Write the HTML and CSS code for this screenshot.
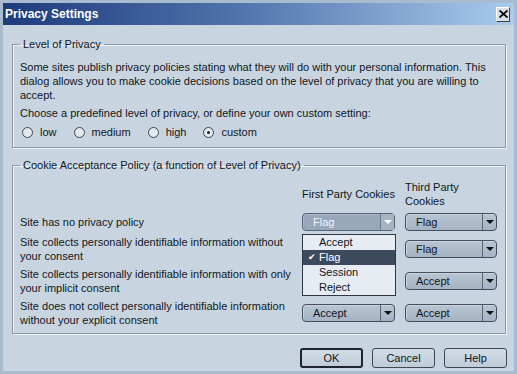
FILE: index.html
```html
<!DOCTYPE html>
<html lang="en">
<head>
    <meta charset="UTF-8">
    <title>Privacy Settings</title>
    <link rel="stylesheet" href="styles.css">
</head>
<body>
    <div class="window">
        <div class="titlebar">
            <span class="title">Privacy Settings</span>
            <span class="close">
                <svg width="9" height="8" viewBox="0 0 9 8"><path d="M0.5 0.5 L8.5 7.5 M8.5 0.5 L0.5 7.5" stroke="#000" stroke-width="1.8"/></svg>
            </span>
        </div>

        <div class="content">
            <fieldset class="group level">
                <legend>Level of Privacy</legend>
                <p class="intro">Some sites publish privacy policies stating what they will do with your personal information. This dialog allows you to make cookie decisions based on the level of privacy that you are willing to accept.</p>
                <p class="prompt">Choose a predefined level of privacy, or define your own custom setting:</p>
                <div class="levels">
                    <label class="radio"><span class="circle"></span>low</label>
                    <label class="radio"><span class="circle"></span>medium</label>
                    <label class="radio"><span class="circle"></span>high</label>
                    <label class="radio"><span class="circle checked"></span>custom</label>
                </div>
            </fieldset>

            <fieldset class="group policy">
                <legend>Cookie Acceptance Policy (a function of Level of Privacy)</legend>
                <div class="policy-grid">
                    <span></span>
                    <span class="col-head">First Party Cookies</span>
                    <span class="col-head">Third Party<br>Cookies</span>

                    <span class="site">Site has no privacy policy</span>
                    <div class="combo open">
                        <span class="value">Flag</span><span class="arrow"></span>
                        <ul class="menu">
                            <li>Accept</li>
                            <li class="picked"><span class="tick">&#10004;</span>Flag</li>
                            <li>Session</li>
                            <li>Reject</li>
                        </ul>
                    </div>
                    <div class="combo"><span class="value">Flag</span><span class="arrow"></span></div>

                    <span class="site">Site collects personally identifiable information without your consent</span>
                    <span></span>
                    <div class="combo"><span class="value">Flag</span><span class="arrow"></span></div>

                    <span class="site">Site collects personally identifiable information with only your implicit consent</span>
                    <span></span>
                    <div class="combo"><span class="value">Accept</span><span class="arrow"></span></div>

                    <span class="site">Site does not collect personally identifiable information without your explicit consent</span>
                    <div class="combo"><span class="value">Accept</span><span class="arrow"></span></div>
                    <div class="combo"><span class="value">Accept</span><span class="arrow"></span></div>
                </div>
            </fieldset>

            <div class="actions">
                <button class="btn default">OK</button>
                <button class="btn">Cancel</button>
                <button class="btn">Help</button>
            </div>
        </div>
    </div>
</body>
</html>
```

FILE: styles.css
```css
body {
    margin: 0;
    font-family: "Liberation Sans", Arial, sans-serif;
    font-size: 11px;
    line-height: 14px;
    color: #11151c;
    background-color: #c8d5e0;
}

.window {
    width: 517px;
    height: 374px;
    box-sizing: border-box;
    border: 3px solid #a9bbcf;
    background-color: #c8d5e0;
    display: flex;
    flex-direction: column;
}

.titlebar {
    height: 22px;
    flex: none;
    display: flex;
    align-items: center;
    justify-content: space-between;
    padding: 0 4px 0 2px;
    background: linear-gradient(to right, #1d3b7b, #4e72aa 45%, #a9cbee);
}

.title {
    color: #fff;
    font-weight: bold;
    font-size: 12px;
}

.close {
    width: 14px;
    height: 15px;
    box-sizing: border-box;
    display: flex;
    align-items: center;
    justify-content: center;
    background-color: #d9e0e7;
    border: 1px solid;
    border-color: #fff #404040 #404040 #fff;
}

.content {
    flex: 1;
    display: flex;
    flex-direction: column;
    padding: 0 8px 0 9px;
}

.group {
    margin: 0;
    min-width: 0;
    border: 1px solid #8a98a7;
    box-shadow: 1px 1px 0 #eef3f7, inset 1px 1px 0 #eef3f7;
}

.group legend {
    padding: 0 3px;
    line-height: 14px;
}

.level {
    margin-top: 12px;
    padding: 9px 8px 8px 7px;
}

.intro,
.prompt {
    margin: 0;
}

.prompt {
    margin-top: 4px;
}

.levels {
    display: flex;
    gap: 17px;
    margin-top: 5px;
    padding-left: 2px;
}

.radio {
    display: flex;
    align-items: center;
    gap: 7px;
}

.circle {
    width: 11px;
    height: 11px;
    box-sizing: border-box;
    border: 1px solid #3c4553;
    border-radius: 50%;
    background-color: #e2e9ef;
    display: flex;
    align-items: center;
    justify-content: center;
}

.circle.checked::after {
    content: "";
    width: 3px;
    height: 3px;
    border-radius: 50%;
    background-color: #1c222b;
}

.policy {
    margin-top: 10px;
    padding: 8px 8px 6px 7px;
}

.policy-grid {
    display: grid;
    grid-template-columns: 1fr 93px 92px;
    column-gap: 10px;
    row-gap: 4px;
    align-items: center;
}

.col-head {
    white-space: nowrap;
    margin-bottom: 1px;
}

.combo {
    position: relative;
    height: 18px;
    box-sizing: border-box;
    display: flex;
    border: 1px solid #434e5e;
    border-radius: 4px;
    background: linear-gradient(#b8c5d2, #a5b4c4);
    box-shadow: inset 1px 1px 0 #c9d4de;
}

.combo .value {
    flex: 1;
    padding-left: 10px;
    line-height: 16px;
}

.combo .arrow {
    width: 13px;
    border-left: 1px solid #5a6576;
    display: flex;
    align-items: center;
    justify-content: center;
}

.combo .arrow::after {
    content: "";
    border-top: 4px solid #111;
    border-left: 4px solid transparent;
    border-right: 4px solid transparent;
}

.combo.open {
    background: #98a7b9;
    border-color: #56637a;
    box-shadow: inset 1px 1px 0 #aab7c5;
    color: #f2f5f8;
}

.combo.open .arrow {
    background-color: #a6b4c4;
    border-left-color: #6d7a8c;
}

.combo.open .arrow::after {
    border-top-color: #fff;
}

.menu {
    position: absolute;
    top: 20px;
    left: -1px;
    width: 94px;
    box-sizing: border-box;
    margin: 0;
    padding: 0;
    list-style: none;
    border: 1px solid #2e3745;
    background-color: #e6ecf1;
    color: #11151c;
    z-index: 2;
}

.menu li {
    position: relative;
    height: 15px;
    line-height: 15px;
    padding-left: 16px;
}

.menu li.picked {
    background-color: #3d4a5d;
    color: #fff;
}

.tick {
    position: absolute;
    left: 5px;
    font-size: 9px;
}

.actions {
    display: flex;
    justify-content: flex-end;
    gap: 9px;
    margin-top: 14px;
    margin-right: -1px;
}

.btn {
    width: 63px;
    height: 20px;
    padding: 0;
    font-family: inherit;
    font-size: 11px;
    color: #11151c;
    border: 1px solid #3e4858;
    border-radius: 3px;
    background: linear-gradient(#d2dce5, #bfccd8);
}

.btn.default {
    border: 2px solid #1d242e;
}
```
